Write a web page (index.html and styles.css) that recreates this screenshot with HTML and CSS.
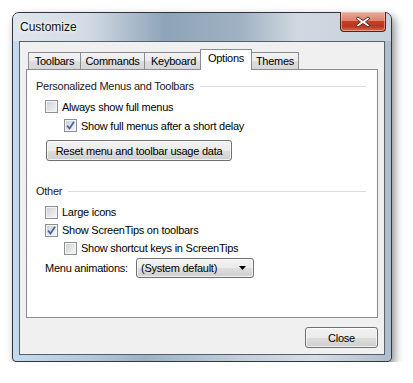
FILE: index.html
```html
<!DOCTYPE html>
<html lang="en">
<head>
    <meta charset="UTF-8">
    <title>Customize</title>
    <link rel="stylesheet" href="styles.css">
</head>
<body>
    <div class="window">
        <div class="titlebar">
            <span class="title">Customize</span>
            <div class="close-x">
                <svg width="16" height="12" viewBox="0 0 16 12">
                    <path d="M3 1 L8 4.5 L13 1 L15 2.5 L10.5 6 L15 9.5 L13 11 L8 7.5 L3 11 L1 9.5 L5.5 6 L1 2.5 Z" fill="#fff" stroke="#5a2a22" stroke-width="1" stroke-linejoin="round"/>
                </svg>
            </div>
        </div>

        <div class="client">
            <div class="tabs">
                <div class="tab tab-toolbars">Toolbars</div>
                <div class="tab tab-commands">Commands</div>
                <div class="tab tab-keyboard">Keyboard</div>
                <div class="tab active">Options</div>
                <div class="tab tab-themes">Themes</div>
            </div>

            <div class="panel">
                <div class="group-head first"><span>Personalized Menus and Toolbars</span><i class="line"></i></div>
                <label class="row tall"><span class="box"></span>Always show full menus</label>
                <label class="row tall indent"><span class="box checked"><svg width="9" height="9" viewBox="0 0 9 9"><path d="M1 4.5 L3.5 7.5 L8 0.8" fill="none" stroke="#4a62a8" stroke-width="1.8"/></svg></span>Show full menus after a short delay</label>
                <button class="btn reset">Reset menu and toolbar usage data</button>

                <div class="group-head other"><span>Other</span><i class="line"></i></div>
                <label class="row first-row"><span class="box"></span>Large icons</label>
                <label class="row"><span class="box checked"><svg width="9" height="9" viewBox="0 0 9 9"><path d="M1 4.5 L3.5 7.5 L8 0.8" fill="none" stroke="#4a62a8" stroke-width="1.8"/></svg></span>Show ScreenTips on toolbars</label>
                <label class="row indent"><span class="box"></span>Show shortcut keys in ScreenTips</label>
                <div class="row select-row">
                    <span class="select-label">Menu animations:</span>
                    <div class="select">
                        <span>(System default)</span>
                        <svg width="7" height="4" viewBox="0 0 7 4"><path d="M0 0 L7 0 L3.5 4 Z" fill="#000"/></svg>
                    </div>
                </div>
            </div>

            <div class="footer">
                <button class="btn close">Close</button>
            </div>
        </div>
    </div>
</body>
</html>
```

FILE: styles.css
```css
body {
    margin: 0;
    background-color: #ffffff;
    font-family: "Liberation Sans", Arial, sans-serif;
    font-size: 11px;
    letter-spacing: -0.25px;
    color: #000;
}

.window {
    margin: 12px 0 0 12px;
    width: 380px;
    height: 350px;
    box-sizing: border-box;
    border: 1px solid #2e3640;
    border-radius: 7px 7px 4px 4px;
    display: flex;
    flex-direction: column;
    background: linear-gradient(to right, #c6daee 0%, #b5c7da 20%, #9fb2c5 35%, #c2ced9 60%, #d6dde4 80%, #aebdcb 100%);
    box-shadow: 3px 4px 9px rgba(0, 0, 0, 0.45);
}

.titlebar {
    height: 28px;
    flex-shrink: 0;
    display: flex;
    justify-content: space-between;
    padding: 0 5px 0 7px;
    background: linear-gradient(to right, #dfe5eb 0%, #d2dbe4 20%, #8fa4b8 40%, #9fb1c2 60%, #d0d8e0 75%, #c7d2dc 100%);
    border-radius: 6px 6px 0 0;
}

.title {
    font-size: 12px;
    line-height: 12px;
    letter-spacing: 0;
    margin-top: 8px;
    color: #111;
    text-shadow: 0 0 6px #fff, 0 0 4px #fff;
}

.close-x {
    width: 46px;
    height: 20px;
    margin-top: -1px;
    box-sizing: border-box;
    border: 1px solid #54231b;
    border-top: none;
    border-radius: 0 0 4px 4px;
    background: linear-gradient(#eaa899 0%, #dc8570 45%, #c53f24 50%, #b6371c 75%, #d56b4c 100%);
    box-shadow: inset 0 0 0 1px rgba(255, 210, 200, 0.5);
    display: flex;
    justify-content: center;
    align-items: center;
}

.client {
    height: 314px;
    margin: 0 6px;
    box-sizing: border-box;
    border: 1px solid #55606b;
    background-color: #f0f0f0;
    padding: 7px 6px 0 6px;
}

.tabs {
    display: flex;
    align-items: flex-end;
    height: 20px;
    padding-left: 2px;
}

.tab {
    height: 17px;
    box-sizing: border-box;
    margin-left: -1px;
    border: 1px solid #898c95;
    border-bottom: none;
    background: linear-gradient(#f3f3f3 0%, #ebebeb 50%, #dedede 51%, #d6d6d6 100%);
    line-height: 16px;
    text-align: center;
}

.tab-toolbars {
    width: 53px;
    margin-left: 0;
}

.tab-commands {
    width: 65px;
}

.tab-keyboard {
    width: 59px;
}

.tab-themes {
    width: 48px;
}

.tab.active {
    position: relative;
    z-index: 1;
    width: 52px;
    height: 21px;
    margin: 0 0 -1px -3px;
    background: #ffffff;
    line-height: 17px;
}

.tab.active + .tab {
    margin-left: -1px;
}

.panel {
    height: 249px;
    box-sizing: border-box;
    border: 1px solid #898c95;
    background-color: #ffffff;
}

.group-head {
    display: flex;
    align-items: center;
    height: 14px;
    padding: 0 11px 0 9px;
    color: #1a1a1a;
}

.group-head.first {
    margin-top: 9px;
}

.group-head.other {
    margin-top: 23px;
}

.group-head .line {
    flex: 1;
    height: 1px;
    margin-left: 6px;
    background-color: #d5dfe5;
}

.row {
    display: flex;
    align-items: center;
    height: 18px;
    padding-left: 18px;
}

.row.tall {
    height: 19px;
}

.group-head.first + .row {
    margin-top: 4px;
}

.row.first-row {
    margin-top: 5px;
}

.row.indent {
    padding-left: 37px;
}

.box {
    width: 13px;
    height: 13px;
    box-sizing: border-box;
    margin-right: 4px;
    border: 1px solid #8e8f8f;
    background: linear-gradient(135deg, #c9ced4 0%, #e6e8ea 60%, #f7f7f7 100%);
    box-shadow: inset 0 0 0 1px #f4f4f4;
    display: flex;
    justify-content: center;
    align-items: center;
}

.btn {
    font-family: "Liberation Sans", Arial, sans-serif;
    font-size: 11px;
    letter-spacing: -0.25px;
    color: #000;
    height: 21px;
    padding: 0;
    border: 1px solid #707070;
    border-radius: 3px;
    background: linear-gradient(#f2f2f2 0%, #ebebeb 50%, #dddddd 51%, #cfcfcf 100%);
    box-shadow: inset 0 0 0 1px rgba(255, 255, 255, 0.7);
}

.btn.reset {
    display: block;
    width: 186px;
    margin: 5px 0 0 19px;
}

.select-row {
    height: 20px;
    margin-top: 1px;
}

.select-label {
    width: 91px;
}

.select {
    width: 118px;
    height: 20px;
    box-sizing: border-box;
    border: 1px solid #707070;
    border-radius: 3px;
    background: linear-gradient(#f2f2f2 0%, #ebebeb 50%, #dddddd 51%, #cfcfcf 100%);
    box-shadow: inset 0 0 0 1px rgba(255, 255, 255, 0.7);
    display: flex;
    align-items: center;
    justify-content: space-between;
    padding: 0 7px 0 4px;
}

.footer {
    display: flex;
    justify-content: flex-end;
    margin-top: 9px;
}

.btn.close {
    width: 73px;
}
```
